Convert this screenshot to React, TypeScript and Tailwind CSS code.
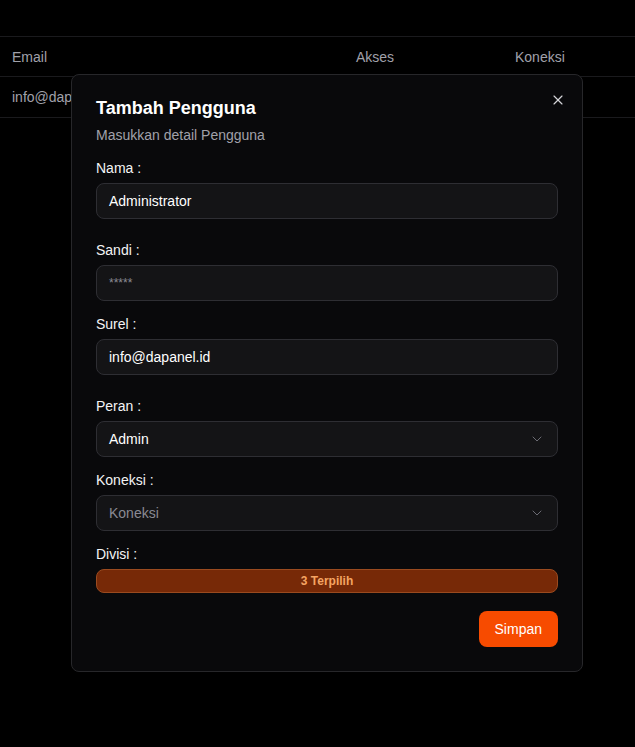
import { ChevronDown, X } from 'lucide-react';

function Field({ label, children, className = '' }: { label: string; children: React.ReactNode; className?: string }) {
  return (
    <div className={className}>
      <label className="block text-sm leading-5 text-[#f4f4f5]">{label}</label>
      <div className="mt-[5px]">{children}</div>
    </div>
  );
}

function TextBox({ value, muted }: { value: string; muted?: boolean }) {
  return (
    <div
      className={`flex h-9 items-center rounded-lg border border-[#2e2e33] bg-[#141416] px-3 ${
        muted ? 'text-xs text-[#8a8a93]' : 'text-sm text-white'
      }`}
    >
      {value}
    </div>
  );
}

function SelectBox({ value, placeholder }: { value: string; placeholder?: boolean }) {
  return (
    <div className="flex h-9 items-center justify-between rounded-lg border border-[#2e2e33] bg-[#141416] px-3 text-sm">
      <span className={placeholder ? 'text-[#8a8a93]' : 'text-white'}>{value}</span>
      <ChevronDown className="h-4 w-4 text-[#6b6b73]" strokeWidth={1.5} />
    </div>
  );
}

export default function App() {
  return (
    <div
      className="relative min-h-[747px] bg-black"
      style={{ fontFamily: '"Liberation Sans", Arial, sans-serif' }}
    >
      {/* table behind */}
      <div className="pt-9">
        <div className="flex h-[41px] items-center border-y border-[#1a1a1d] px-3 text-sm text-[#a1a1aa]">
          <div className="w-[344px]">Email</div>
          <div className="w-[159px]">Akses</div>
          <div>Koneksi</div>
        </div>
        <div className="flex h-[41px] items-center border-b border-[#1a1a1d] px-3 text-sm text-[#a1a1aa]">
          info@dapanel.id
        </div>
      </div>

      {/* dialog */}
      <div className="absolute left-[71px] top-[74px] w-[512px] rounded-lg border border-[#27272a] bg-[#09090b] px-6 pt-[19px] pb-6">
        <button className="absolute right-[16px] top-[17px] text-[#d4d4d8]">
          <X className="h-4 w-4" strokeWidth={1.75} />
        </button>
        <h2 className="text-lg font-bold leading-7 text-white">Tambah Pengguna</h2>
        <p className="mt-[3px] text-sm leading-5 text-[#a1a1aa]">Masukkan detail Pengguna</p>

        <Field label="Nama :" className="mt-[13px]">
          <TextBox value="Administrator" />
        </Field>
        <Field label="Sandi :" className="mt-[21px]">
          <TextBox value="*****" muted />
        </Field>
        <Field label="Surel :" className="mt-[13px]">
          <TextBox value="info@dapanel.id" />
        </Field>
        <Field label="Peran :" className="mt-[21px]">
          <SelectBox value="Admin" />
        </Field>
        <Field label="Koneksi :" className="mt-[13px]">
          <SelectBox value="Koneksi" placeholder />
        </Field>
        <Field label="Divisi :" className="mt-[13px]">
          <div className="flex h-6 items-center justify-center rounded-lg border border-[#9a4a1f] bg-[#772907] text-xs font-bold text-[#f5a462]">
            3 Terpilih
          </div>
        </Field>

        <div className="mt-[18px] flex justify-end">
          <button className="h-9 rounded-lg bg-[#f74b00] px-4 text-sm font-medium text-white">
            Simpan
          </button>
        </div>
      </div>
    </div>
  );
}
